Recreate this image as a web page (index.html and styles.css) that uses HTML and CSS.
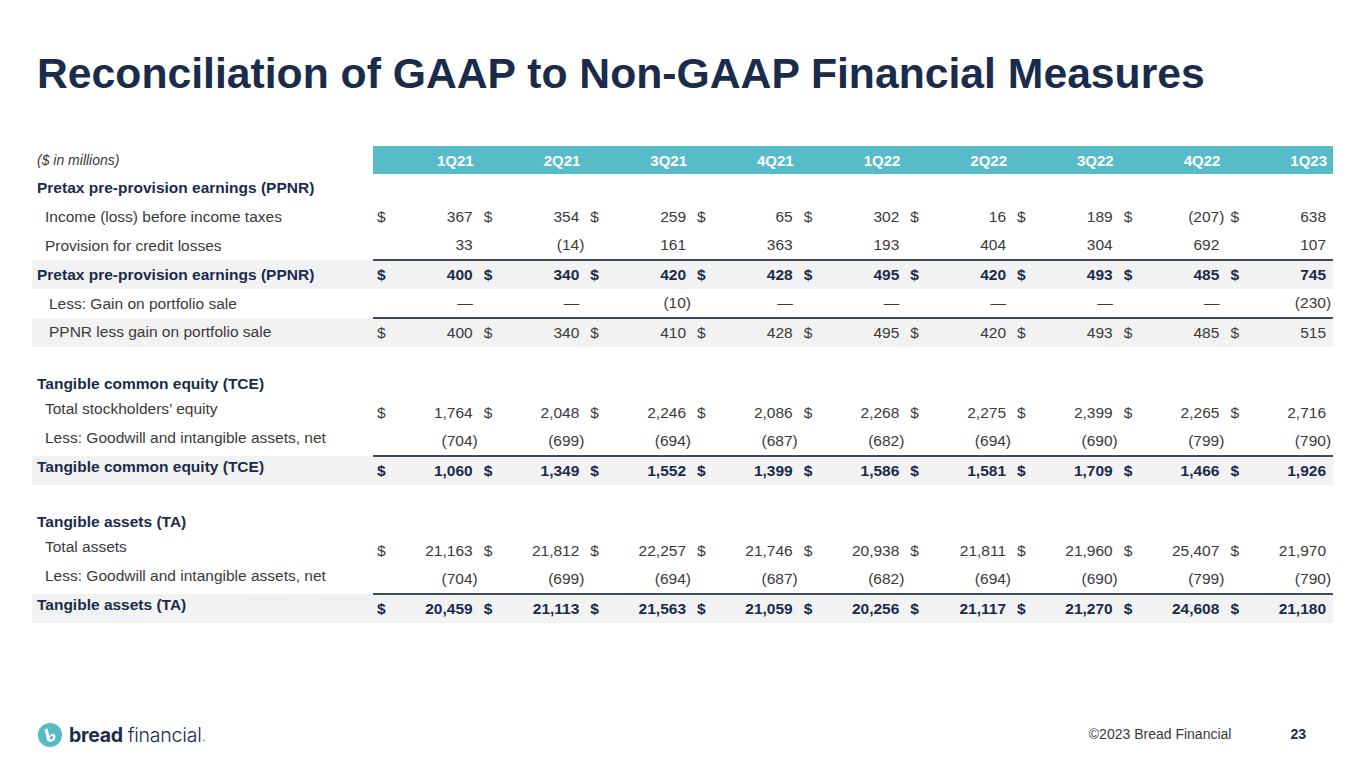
FILE: index.html
```html
<!DOCTYPE html>
<html lang="en">
<head>
<meta charset="utf-8">
<title>Reconciliation of GAAP to Non-GAAP Financial Measures</title>
<link rel="stylesheet" href="styles.css">
</head>
<body>
<div class="slide">
  <h1 class="title">Reconciliation of GAAP to Non-GAAP Financial Measures</h1>

  <table class="recon">
    <colgroup>
      <col class="c-label">
      <col class="c-cur"><col class="c-val">
      <col class="c-cur"><col class="c-val">
      <col class="c-cur"><col class="c-val">
      <col class="c-cur"><col class="c-val">
      <col class="c-cur"><col class="c-val">
      <col class="c-cur"><col class="c-val">
      <col class="c-cur"><col class="c-val">
      <col class="c-cur"><col class="c-val">
      <col class="c-cur"><col class="c-val">
    </colgroup>
    <thead>
      <tr class="hdr">
        <th class="lbl units">($ in millions)</th>
        <th colspan="2" class="q">1Q21</th>
        <th colspan="2" class="q">2Q21</th>
        <th colspan="2" class="q">3Q21</th>
        <th colspan="2" class="q">4Q21</th>
        <th colspan="2" class="q">1Q22</th>
        <th colspan="2" class="q">2Q22</th>
        <th colspan="2" class="q">3Q22</th>
        <th colspan="2" class="q">4Q22</th>
        <th colspan="2" class="q">1Q23</th>
      </tr>
    </thead>
    <tbody>
      <tr class="head"><td class="lbl">Pretax pre-provision earnings (PPNR)</td><td colspan="18"></td></tr>
      <tr>
        <td class="lbl ind1">Income (loss) before income taxes</td>
        <td class="cur">$</td><td class="val">367</td>
        <td class="cur">$</td><td class="val">354</td>
        <td class="cur">$</td><td class="val">259</td>
        <td class="cur">$</td><td class="val">65</td>
        <td class="cur">$</td><td class="val">302</td>
        <td class="cur">$</td><td class="val">16</td>
        <td class="cur">$</td><td class="val">189</td>
        <td class="cur">$</td><td class="val"><span class="neg">(207)</span></td>
        <td class="cur">$</td><td class="val">638</td>
      </tr>
      <tr>
        <td class="lbl ind1">Provision for credit losses</td>
        <td class="cur"></td><td class="val">33</td>
        <td class="cur"></td><td class="val"><span class="neg">(14)</span></td>
        <td class="cur"></td><td class="val">161</td>
        <td class="cur"></td><td class="val">363</td>
        <td class="cur"></td><td class="val">193</td>
        <td class="cur"></td><td class="val">404</td>
        <td class="cur"></td><td class="val">304</td>
        <td class="cur"></td><td class="val">692</td>
        <td class="cur"></td><td class="val">107</td>
      </tr>
      <tr class="total strong">
        <td class="lbl">Pretax pre-provision earnings (PPNR)</td>
        <td class="cur">$</td><td class="val">400</td>
        <td class="cur">$</td><td class="val">340</td>
        <td class="cur">$</td><td class="val">420</td>
        <td class="cur">$</td><td class="val">428</td>
        <td class="cur">$</td><td class="val">495</td>
        <td class="cur">$</td><td class="val">420</td>
        <td class="cur">$</td><td class="val">493</td>
        <td class="cur">$</td><td class="val">485</td>
        <td class="cur">$</td><td class="val">745</td>
      </tr>
      <tr>
        <td class="lbl ind2">Less: Gain on portfolio sale</td>
        <td class="cur"></td><td class="val">—</td>
        <td class="cur"></td><td class="val">—</td>
        <td class="cur"></td><td class="val"><span class="neg">(10)</span></td>
        <td class="cur"></td><td class="val">—</td>
        <td class="cur"></td><td class="val">—</td>
        <td class="cur"></td><td class="val">—</td>
        <td class="cur"></td><td class="val">—</td>
        <td class="cur"></td><td class="val">—</td>
        <td class="cur"></td><td class="val"><span class="neg">(230)</span></td>
      </tr>
      <tr class="total">
        <td class="lbl ind2">PPNR less gain on portfolio sale</td>
        <td class="cur">$</td><td class="val">400</td>
        <td class="cur">$</td><td class="val">340</td>
        <td class="cur">$</td><td class="val">410</td>
        <td class="cur">$</td><td class="val">428</td>
        <td class="cur">$</td><td class="val">495</td>
        <td class="cur">$</td><td class="val">420</td>
        <td class="cur">$</td><td class="val">493</td>
        <td class="cur">$</td><td class="val">485</td>
        <td class="cur">$</td><td class="val">515</td>
      </tr>

      <tr class="gap"><td colspan="19"></td></tr>

      <tr class="head"><td class="lbl">Tangible common equity (TCE)</td><td colspan="18"></td></tr>
      <tr>
        <td class="lbl ind1 up">Total stockholders’ equity</td>
        <td class="cur">$</td><td class="val">1,764</td>
        <td class="cur">$</td><td class="val">2,048</td>
        <td class="cur">$</td><td class="val">2,246</td>
        <td class="cur">$</td><td class="val">2,086</td>
        <td class="cur">$</td><td class="val">2,268</td>
        <td class="cur">$</td><td class="val">2,275</td>
        <td class="cur">$</td><td class="val">2,399</td>
        <td class="cur">$</td><td class="val">2,265</td>
        <td class="cur">$</td><td class="val">2,716</td>
      </tr>
      <tr>
        <td class="lbl ind1 up">Less: Goodwill and intangible assets, net</td>
        <td class="cur"></td><td class="val"><span class="neg">(704)</span></td>
        <td class="cur"></td><td class="val"><span class="neg">(699)</span></td>
        <td class="cur"></td><td class="val"><span class="neg">(694)</span></td>
        <td class="cur"></td><td class="val"><span class="neg">(687)</span></td>
        <td class="cur"></td><td class="val"><span class="neg">(682)</span></td>
        <td class="cur"></td><td class="val"><span class="neg">(694)</span></td>
        <td class="cur"></td><td class="val"><span class="neg">(690)</span></td>
        <td class="cur"></td><td class="val"><span class="neg">(799)</span></td>
        <td class="cur"></td><td class="val"><span class="neg">(790)</span></td>
      </tr>
      <tr class="total strong">
        <td class="lbl up">Tangible common equity (TCE)</td>
        <td class="cur">$</td><td class="val">1,060</td>
        <td class="cur">$</td><td class="val">1,349</td>
        <td class="cur">$</td><td class="val">1,552</td>
        <td class="cur">$</td><td class="val">1,399</td>
        <td class="cur">$</td><td class="val">1,586</td>
        <td class="cur">$</td><td class="val">1,581</td>
        <td class="cur">$</td><td class="val">1,709</td>
        <td class="cur">$</td><td class="val">1,466</td>
        <td class="cur">$</td><td class="val">1,926</td>
      </tr>

      <tr class="gap"><td colspan="19"></td></tr>

      <tr class="head"><td class="lbl">Tangible assets (TA)</td><td colspan="18"></td></tr>
      <tr>
        <td class="lbl ind1 up">Total assets</td>
        <td class="cur">$</td><td class="val">21,163</td>
        <td class="cur">$</td><td class="val">21,812</td>
        <td class="cur">$</td><td class="val">22,257</td>
        <td class="cur">$</td><td class="val">21,746</td>
        <td class="cur">$</td><td class="val">20,938</td>
        <td class="cur">$</td><td class="val">21,811</td>
        <td class="cur">$</td><td class="val">21,960</td>
        <td class="cur">$</td><td class="val">25,407</td>
        <td class="cur">$</td><td class="val">21,970</td>
      </tr>
      <tr>
        <td class="lbl ind1 up">Less: Goodwill and intangible assets, net</td>
        <td class="cur"></td><td class="val"><span class="neg">(704)</span></td>
        <td class="cur"></td><td class="val"><span class="neg">(699)</span></td>
        <td class="cur"></td><td class="val"><span class="neg">(694)</span></td>
        <td class="cur"></td><td class="val"><span class="neg">(687)</span></td>
        <td class="cur"></td><td class="val"><span class="neg">(682)</span></td>
        <td class="cur"></td><td class="val"><span class="neg">(694)</span></td>
        <td class="cur"></td><td class="val"><span class="neg">(690)</span></td>
        <td class="cur"></td><td class="val"><span class="neg">(799)</span></td>
        <td class="cur"></td><td class="val"><span class="neg">(790)</span></td>
      </tr>
      <tr class="total strong">
        <td class="lbl up">Tangible assets (TA)</td>
        <td class="cur">$</td><td class="val">20,459</td>
        <td class="cur">$</td><td class="val">21,113</td>
        <td class="cur">$</td><td class="val">21,563</td>
        <td class="cur">$</td><td class="val">21,059</td>
        <td class="cur">$</td><td class="val">20,256</td>
        <td class="cur">$</td><td class="val">21,117</td>
        <td class="cur">$</td><td class="val">21,270</td>
        <td class="cur">$</td><td class="val">24,608</td>
        <td class="cur">$</td><td class="val">21,180</td>
      </tr>
    </tbody>
  </table>

  <footer class="footer">
    <div class="logo">
      <svg class="logo-mark" viewBox="0 0 24 24" width="24" height="24" aria-hidden="true">
        <circle cx="12" cy="12" r="12" fill="#57b9c6"/>
        <path d="M6.6 6.2 L9.6 5.6 L11.4 13.2 C12.2 11.6 13.6 10.6 15.2 10.8 C17.6 11.2 18.2 14.2 16.6 16.4 C15.2 18.4 12.6 19.2 10.8 18.6 C9.6 18.2 9 17.2 8.8 16 Z" fill="#ffffff"/>
        <path d="M11.6 14.6 C12.2 13.4 13.4 12.8 14.4 13.2 C15.4 13.6 15.2 15.2 14.2 16 C13.4 16.6 12.2 16.6 11.8 15.8 Z" fill="#57b9c6"/>
      </svg>
      <span class="logo-bread">bread</span><span class="logo-fin">financial</span><span class="logo-dot">.</span>
    </div>
    <div class="foot-right">
      <span class="copy">©2023 Bread Financial</span>
      <span class="page">23</span>
    </div>
  </footer>
</div>
</body>
</html>
```

FILE: styles.css
```css
html, body {
  margin: 0;
  padding: 0;
  background: #ffffff;
}

.slide {
  width: 1365px;
  height: 768px;
  display: flex;
  flex-direction: column;
  font-family: "Liberation Sans", Arial, sans-serif;
  color: #3a3a3a;
  overflow: hidden;
}

.title {
  margin: 49px 0 0 37px;
  font-size: 42.7px;
  line-height: 48px;
  font-weight: 700;
  color: #1a2b4c;
  letter-spacing: 0;
}

.recon {
  margin: 49px 0 0 32px;
  width: 1301px;
  table-layout: fixed;
  border-collapse: collapse;
  border-spacing: 0;
  font-size: 15.5px;
}

.c-label { width: 341px; }
.c-cur { width: 30px; }
.c-val { width: 76.67px; }

.recon th,
.recon td {
  padding: 0;
  white-space: nowrap;
  vertical-align: middle;
}

.hdr th {
  height: 28px;
}

.units {
  text-align: left;
  font-style: italic;
  font-weight: 400;
  font-size: 14px;
  color: #3a3a3a;
  padding-left: 5px !important;
}

.q {
  background: #58bbc8;
  color: #ffffff;
  font-size: 15px;
  font-weight: 700;
  text-align: right;
  padding-right: 6px !important;
}

.recon tbody tr {
  height: 28.8px;
}

.lbl {
  text-align: left;
  padding-left: 5px !important;
}

.ind1 { padding-left: 13px !important; }
.ind2 { padding-left: 17px !important; }

.up { padding-bottom: 8px !important; }

.head .lbl {
  font-weight: 700;
  color: #1a2b4c;
}

.cur {
  text-align: left;
  padding-left: 4px !important;
}

.val {
  text-align: right;
  padding-right: 7px !important;
}

.neg {
  margin-right: -5px;
}

.total td {
  background: #f2f2f2;
}

.total td.cur,
.total td.val {
  border-top: 2px solid #3d4a60;
}

.strong td {
  font-weight: 700;
  color: #1a2b4c;
}

.gap {
  height: 23px !important;
}

.footer {
  margin-top: auto;
  height: 52px;
  display: flex;
  align-items: flex-start;
  justify-content: space-between;
  padding: 0 59px 0 38px;
}

.logo {
  display: flex;
  align-items: center;
  margin-top: 7px;
  height: 24px;
}

.logo-mark {
  display: block;
  margin-right: 7px;
}

.logo-bread {
  font-family: Inter, "Noto Sans", sans-serif;
  font-weight: 700;
  font-size: 19.5px;
  color: #1a2b4c;
  letter-spacing: -0.3px;
  margin-right: 5px;
}

.logo-fin {
  font-family: Inter, "Noto Sans", sans-serif;
  font-weight: 300;
  font-size: 19.5px;
  color: #1a2b4c;
  letter-spacing: -0.2px;
}

.logo-dot {
  font-family: Inter, "Noto Sans", sans-serif;
  font-size: 9px;
  color: #1a2b4c;
  align-self: flex-end;
  margin-left: 1px;
  margin-bottom: 4px;
}

.foot-right {
  display: flex;
  align-items: center;
  margin-top: 10px;
  font-size: 14px;
}

.copy {
  color: #3a3a3a;
  margin-right: 59px;
}

.page {
  font-weight: 700;
  color: #1a2b4c;
}
```
